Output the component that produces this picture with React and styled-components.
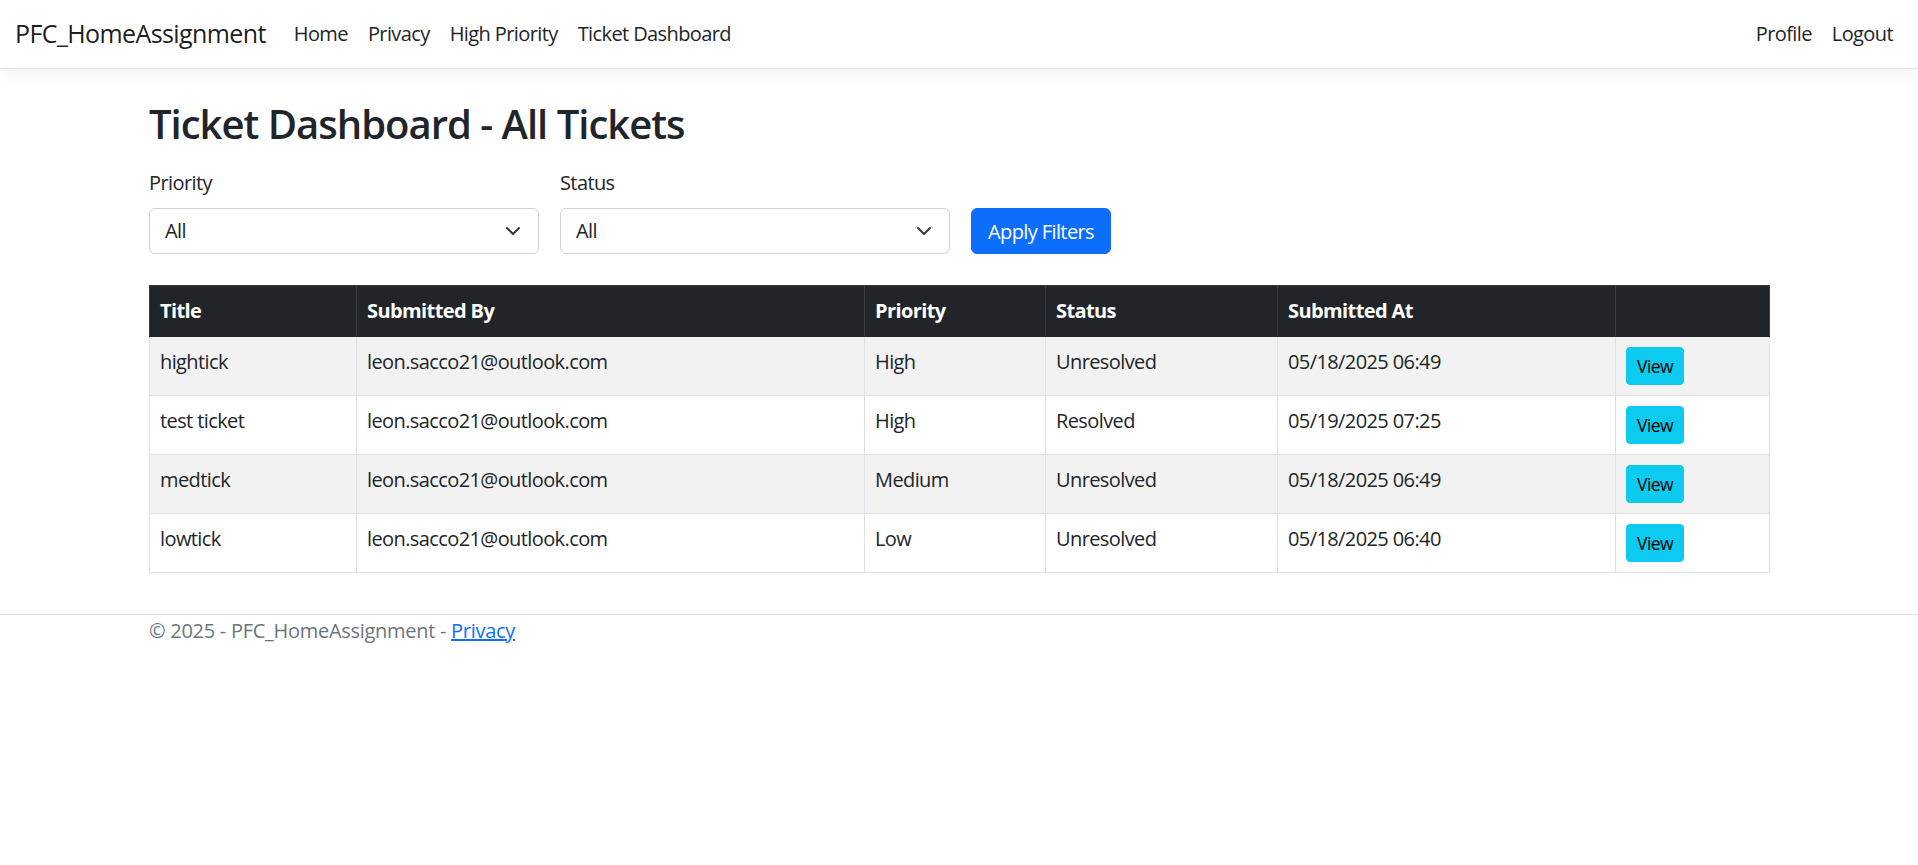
import { createGlobalStyle } from 'styled-components'
import styled from 'styled-components'

const GlobalStyle = createGlobalStyle`
    html, body {
        margin: 0;
        padding: 0;
        background: #fff;
    }
    body {
        font-family: 'Open Sans', 'Liberation Sans', sans-serif;
        font-size: 20px;
        line-height: 1.5;
        letter-spacing: -0.03em;
        color: #212529;
    }
`

const Navbar = styled.nav`
    display: flex;
    align-items: center;
    padding: 9px 15px;
    border-bottom: 1px solid #dee2e6;
    box-shadow: 0 5px 15px rgba(0, 0, 0, 0.05);
`

const Brand = styled.a`
    font-size: 25px;
    line-height: 37.5px;
    padding: 6px 0;
    margin-right: 18px;
    color: rgba(0, 0, 0, 0.9);
    text-decoration: none;
    white-space: nowrap;
`

const NavList = styled.div`
    display: flex;
    flex: ${(p) => (p.grow ? 1 : 'none')};
`

const NavLink = styled.a`
    padding: 10px;
    line-height: 30px;
    color: #212529;
    text-decoration: none;
    white-space: nowrap;
`

const Container = styled.main`
    width: 1620px;
    margin: 0 auto;
    padding-top: 31px;
`

const Heading = styled.h2`
    margin: 0 0 20px;
    font-size: 40px;
    font-weight: 600;
    line-height: 48px;
    letter-spacing: -0.025em;
`

const FilterRow = styled.form`
    display: flex;
    align-items: flex-end;
    gap: 21px;
    margin-bottom: 31px;
`

const Field = styled.div`
    width: 390px;
`

const Label = styled.label`
    display: block;
    line-height: 30px;
    margin-bottom: 10px;
`

const SelectBox = styled.div`
    box-sizing: border-box;
    height: 46px;
    display: flex;
    align-items: center;
    justify-content: space-between;
    padding: 0 17px 0 15px;
    border: 1px solid #ced4da;
    border-radius: 6px;
    background: #fff;
    color: #212529;
`

const Button = styled.button`
    box-sizing: border-box;
    height: ${(p) => (p.small ? '38px' : '46px')};
    min-width: ${(p) => (p.small ? '58px' : '140px')};
    padding: ${(p) => (p.small ? '0 10px' : '0 15px')};
    font-family: inherit;
    letter-spacing: inherit;
    font-size: ${(p) => (p.small ? '17.5px' : '20px')};
    border: 1px solid ${(p) => (p.variant === 'info' ? '#0dcaf0' : '#0d6efd')};
    border-radius: ${(p) => (p.small ? '4px' : '6px')};
    background: ${(p) => (p.variant === 'info' ? '#0dcaf0' : '#0d6efd')};
    color: ${(p) => (p.variant === 'info' ? '#000' : '#fff')};
    cursor: pointer;
`

const Table = styled.table`
    width: 1620px;
    table-layout: fixed;
    border-collapse: collapse;
    margin-bottom: 41px;
    border: 1px solid #dee2e6;
`

const HeadCell = styled.th`
    background: #212529;
    color: #fff;
    font-weight: 700;
    text-align: left;
    vertical-align: top;
    padding: 10px;
    line-height: 30px;
    border: 1px solid #373b3e;
    border-bottom-color: #212529;
`

const Row = styled.tr`
    background: ${(p) => (p.striped ? '#f2f2f2' : '#fff')};
`

const Cell = styled.td`
    padding: 10px;
    line-height: 30px;
    vertical-align: top;
    border: 1px solid #dee2e6;
`

const Footer = styled.footer`
    border-top: 1px solid #dee2e6;
    color: #6c757d;
    line-height: 30px;
    padding-top: 1px;
`

const FooterInner = styled.div`
    width: 1620px;
    margin: 0 auto;
    white-space: nowrap;
    letter-spacing: -0.014em;

    a {
        color: #0d6efd;
    }
`

const Chevron = () => (
    <svg width="16" height="16" viewBox="0 0 16 16">
        <path
            d="M2 5l6 6 6-6"
            fill="none"
            stroke="#343a40"
            strokeWidth="2"
            strokeLinecap="round"
            strokeLinejoin="round"
        />
    </svg>
)

const columns = [
    ['Title', 207],
    ['Submitted By', 508],
    ['Priority', 181],
    ['Status', 232],
    ['Submitted At', 338],
    ['', 154],
]

const tickets = [
    ['hightick', 'leon.sacco21@outlook.com', 'High', 'Unresolved', '05/18/2025 06:49'],
    ['test ticket', 'leon.sacco21@outlook.com', 'High', 'Resolved', '05/19/2025 07:25'],
    ['medtick', 'leon.sacco21@outlook.com', 'Medium', 'Unresolved', '05/18/2025 06:49'],
    ['lowtick', 'leon.sacco21@outlook.com', 'Low', 'Unresolved', '05/18/2025 06:40'],
]

export default function App() {
    return (
        <>
            <GlobalStyle />
            <Navbar>
                <Brand href="#">PFC_HomeAssignment</Brand>
                <NavList grow>
                    <NavLink href="#">Home</NavLink>
                    <NavLink href="#">Privacy</NavLink>
                    <NavLink href="#">High Priority</NavLink>
                    <NavLink href="#">Ticket Dashboard</NavLink>
                </NavList>
                <NavList>
                    <NavLink href="#">Profile</NavLink>
                    <NavLink href="#">Logout</NavLink>
                </NavList>
            </Navbar>
            <Container>
                <Heading>Ticket Dashboard - All Tickets</Heading>
                <FilterRow onSubmit={(e) => e.preventDefault()}>
                    <Field>
                        <Label>Priority</Label>
                        <SelectBox>
                            <span>All</span>
                            <Chevron />
                        </SelectBox>
                    </Field>
                    <Field>
                        <Label>Status</Label>
                        <SelectBox>
                            <span>All</span>
                            <Chevron />
                        </SelectBox>
                    </Field>
                    <Button type="submit">Apply Filters</Button>
                </FilterRow>
                <Table>
                    <colgroup>
                        {columns.map(([name, width], i) => (
                            <col key={i} style={{ width }} />
                        ))}
                    </colgroup>
                    <thead>
                        <tr>
                            {columns.map(([name], i) => (
                                <HeadCell key={i}>{name}</HeadCell>
                            ))}
                        </tr>
                    </thead>
                    <tbody>
                        {tickets.map((t, i) => (
                            <Row key={i} striped={i % 2 === 0}>
                                {t.map((value, j) => (
                                    <Cell key={j}>{value}</Cell>
                                ))}
                                <Cell>
                                    <Button small variant="info">
                                        View
                                    </Button>
                                </Cell>
                            </Row>
                        ))}
                    </tbody>
                </Table>
            </Container>
            <Footer>
                <FooterInner>
                    © 2025 - PFC_HomeAssignment - <a href="#">Privacy</a>
                </FooterInner>
            </Footer>
        </>
    )
}
